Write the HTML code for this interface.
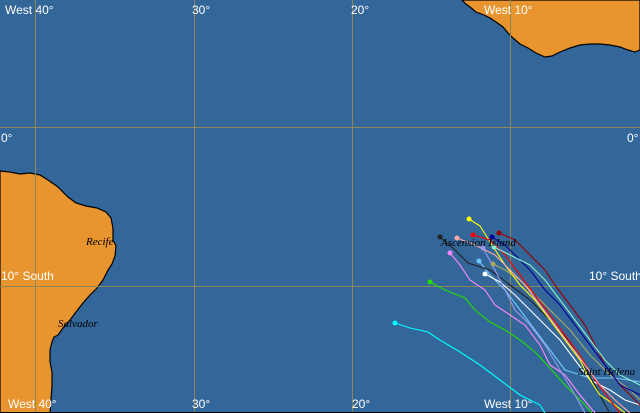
<!DOCTYPE html>
<html><head><style>
html,body{margin:0;padding:0;background:#336699;}
svg{display:block}
text{font-family:"Liberation Sans",sans-serif;font-size:12px;fill:#fff}
.it{font-family:"Liberation Serif",serif;font-style:italic;font-size:11px;fill:#000}
</style></head><body>
<svg width="640" height="413" viewBox="0 0 640 413" xmlns="http://www.w3.org/2000/svg">
<rect width="640" height="413" fill="#336699"/>
<path d="M462,0 L466,4 L470,7 L476,12 L484,15 L490,18 L496,22 L503,27 L508,33 L513,38 L520,44 L528,48 L536,53 L545,57 L552,56 L560,52 L570,48 L580,45 L590,44 L600,44 L610,45 L620,47 L628,50 L635,52 L640,50 L640,0 Z" fill="#e8952f" stroke="#000" stroke-width="1.2"/>
<path d="M0,171 L10,172 L20,174 L30,173 L40,175 L48,180 L58,187 L68,197 L76,203 L86,206 L97,208 L106,212 L111,218 L113,228 L113,240 L116,246 L115,256 L112,264 L108,270 L103,280 L97,288 L90,295 L83,303 L76,312 L70,320 L63,328 L58,335 L54,337 L52,342 L50,350 L50,362 L52,372 L52,385 L51,400 L50,413 L0,413 Z" fill="#e8952f" stroke="#000" stroke-width="1.2"/>
<g stroke="#8c8658" stroke-width="1">
<line x1="35.5" y1="0" x2="35.5" y2="413"/><line x1="194.5" y1="0" x2="194.5" y2="413"/>
<line x1="352.5" y1="0" x2="352.5" y2="413"/><line x1="510.5" y1="0" x2="510.5" y2="413"/>
<line x1="0" y1="127.5" x2="640" y2="127.5"/><line x1="0" y1="286.5" x2="640" y2="286.5"/>
</g>
<line x1="0" y1="412.5" x2="640" y2="412.5" stroke="#000"/>
<text x="5" y="14">West 40°</text><text x="192" y="14">30°</text><text x="351" y="14">20°</text><text x="484" y="14">West 10°</text>
<text x="1" y="142">0°</text><text x="627" y="142">0°</text>
<text x="1" y="280">10° South</text><text x="589" y="280">10° South</text>
<text x="8" y="408">West 40°</text><text x="192" y="408">30°</text><text x="352" y="408">20°</text><text x="484" y="408">West 10°</text>
<g fill="none" stroke-width="1.1">
<polyline stroke="#00ffff" points="395,323 410,328 428,332 440,340 460,352 480,365 500,380 520,395 540,405 545,413"/>
<polyline stroke="#22dd00" points="430,282 445,290 465,298 475,310 490,322 505,330 520,340 535,352 550,368 565,385 585,405 592,413"/>
<polyline stroke="#ff88ff" points="450,253 460,265 470,280 485,290 495,305 510,315 525,325 540,345 550,365 565,375 580,395 595,413"/>
<polyline stroke="#6fc8ff" points="479,261 490,275 505,290 520,310 535,330 550,350 565,370 590,378 615,378 640,382"/>
<polyline stroke="#ffffff" points="485,274 500,282 515,295 530,310 545,325 560,340 575,360 590,380 610,390 625,400 640,405"/>
<polyline stroke="#222222" points="440,237 455,250 468,263 490,270 510,285 530,300 550,320 568,340 580,360 595,385 605,405 610,413"/>
<polyline stroke="#9999ee" points="483,248 495,270 505,290 515,310 530,325 545,345 560,370 575,395 585,413"/>
<polyline stroke="#aaaa66" points="493,264 505,270 520,280 535,295 550,310 570,330 590,355 610,375 630,390 640,400"/>
<polyline stroke="#ffff00" points="469,219 480,226 492,245 505,265 520,285 535,300 550,320 565,340 580,360 590,380 600,395 615,405 625,413"/>
<polyline stroke="#ff0000" points="473,235 490,240 505,255 520,275 535,295 550,315 565,335 580,355 595,380 610,400 620,413"/>
<polyline stroke="#990000" points="499,233 515,240 530,255 545,270 555,285 570,305 585,325 595,345 605,365 620,385 640,405"/>
<polyline stroke="#000099" points="492,237 505,245 518,258 530,270 545,290 560,305 575,325 590,345 605,365 620,385 640,395"/>
<polyline stroke="#88eecc" points="494,247 510,255 530,265 545,280 560,300 575,320 590,340 605,360 620,375 640,385"/>
<polyline stroke="#ffaaaa" points="457,238 475,245 495,255 510,270 525,285 540,305 555,325 570,345 585,365 600,385 615,400 630,413"/>
</g>
<g>
<circle cx="395" cy="323" r="2.5" fill="#00ffff"/><circle cx="430" cy="282" r="2.5" fill="#22dd00"/>
<circle cx="450" cy="253" r="2.5" fill="#ff88ff"/><circle cx="479" cy="261" r="2.5" fill="#6fc8ff"/>
<circle cx="485" cy="274" r="2.5" fill="#fff"/><circle cx="440" cy="237" r="2.5" fill="#222"/>
<circle cx="483" cy="248" r="2.5" fill="#9999ee"/><circle cx="493" cy="264" r="2.5" fill="#aaaa66"/>
<circle cx="469" cy="219" r="2.5" fill="#ff0"/><circle cx="473" cy="235" r="2.5" fill="#f00"/>
<circle cx="499" cy="233" r="2.5" fill="#900"/><circle cx="492" cy="237" r="2.5" fill="#009"/>
<circle cx="494" cy="247" r="2.5" fill="#88eecc"/><circle cx="457" cy="238" r="2.5" fill="#ffaaaa"/>
</g>
<text class="it" x="441" y="246">Ascension Island</text>
<text class="it" x="578" y="375">Saint Helena</text>
<text class="it" x="86" y="245">Recife</text>
<text class="it" x="58" y="327">Salvador</text>
</svg>
</body></html>
